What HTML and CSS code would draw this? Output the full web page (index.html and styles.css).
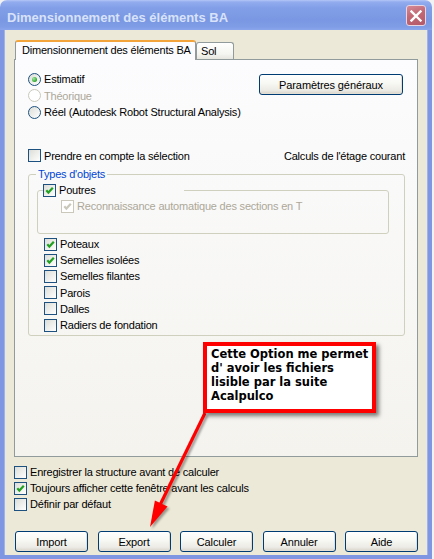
FILE: index.html
```html
<!DOCTYPE html>
<html lang="fr">
<head>
<meta charset="utf-8">
<title>Dimensionnement des éléments BA</title>
<link rel="stylesheet" href="styles.css">
</head>
<body>
<div class="window">
  <div class="titlebar">
    <span class="title">Dimensionnement des éléments BA</span>
    <span class="close"><svg width="12" height="12" viewBox="0 0 12 12"><path d="M1.5 1.5 L10.5 10.5 M10.5 1.5 L1.5 10.5" stroke="#fff" stroke-width="2.4" stroke-linecap="square"/></svg></span>
  </div>
  <div class="frame">
    <div class="tabs">
      <div class="tab active">Dimensionnement des éléments BA</div>
      <div class="tab sol">Sol</div>
    </div>
    <div class="page">
      <div class="top-row">
        <div class="radios">
          <div class="opt"><span class="rb checked"></span>Estimatif</div>
          <div class="opt disabled"><span class="rb"></span>Théorique</div>
          <div class="opt"><span class="rb"></span>Réel (Autodesk Robot Structural Analysis)</div>
        </div>
        <button class="btn wide">Paramètres généraux</button>
      </div>
      <div class="sel-row">
        <div class="opt"><span class="cb"></span>Prendre en compte la sélection</div>
        <span>Calculs de l'étage courant</span>
      </div>
      <fieldset class="group">
        <legend>Types d'objets</legend>
        <fieldset class="subgroup">
          <legend><div class="opt"><span class="cb"><svg viewBox="0 0 11 11" width="11" height="11"><path d="M2.3 5.2 L4.4 7.6 L8.8 2.8" fill="none" stroke="currentColor" stroke-width="2.2"/></svg></span>Poutres</div></legend>
          <div class="opt disabled sub"><span class="cb"><svg viewBox="0 0 11 11" width="11" height="11"><path d="M2.3 5.2 L4.4 7.6 L8.8 2.8" fill="none" stroke="currentColor" stroke-width="2.2"/></svg></span>Reconnaissance automatique des sections en T</div>
        </fieldset>
        <div class="list">
          <div class="opt"><span class="cb"><svg viewBox="0 0 11 11" width="11" height="11"><path d="M2.3 5.2 L4.4 7.6 L8.8 2.8" fill="none" stroke="currentColor" stroke-width="2.2"/></svg></span>Poteaux</div>
          <div class="opt"><span class="cb"><svg viewBox="0 0 11 11" width="11" height="11"><path d="M2.3 5.2 L4.4 7.6 L8.8 2.8" fill="none" stroke="currentColor" stroke-width="2.2"/></svg></span>Semelles isolées</div>
          <div class="opt"><span class="cb"></span>Semelles filantes</div>
          <div class="opt"><span class="cb"></span>Parois</div>
          <div class="opt"><span class="cb"></span>Dalles</div>
          <div class="opt"><span class="cb"></span>Radiers de fondation</div>
        </div>
      </fieldset>
    </div>
    <div class="options">
      <div class="opt"><span class="cb"></span>Enregistrer la structure avant de calculer</div>
      <div class="opt"><span class="cb"><svg viewBox="0 0 11 11" width="11" height="11"><path d="M2.3 5.2 L4.4 7.6 L8.8 2.8" fill="none" stroke="currentColor" stroke-width="2.2"/></svg></span>Toujours afficher cette fenêtre avant les calculs</div>
      <div class="opt"><span class="cb"></span>Définir par défaut</div>
    </div>
    <div class="buttons">
      <button class="btn">Import</button>
      <button class="btn">Export</button>
      <button class="btn">Calculer</button>
      <button class="btn">Annuler</button>
      <button class="btn">Aide</button>
    </div>
  </div>
  <svg class="arrow" width="434" height="559" viewBox="0 0 434 559">
    <line x1="205" y1="413" x2="160" y2="505" stroke="#ff0000" stroke-width="3.2"/>
    <polygon points="150,527 167.5,506.5 154.9,500.5" fill="#ff0000"/>
  </svg>
  <div class="callout">Cette Option me permet<br>d' avoir les fichiers<br>lisible par la suite<br>Acalpulco</div>
</div>
</body>
</html>
```

FILE: styles.css
```css
* { box-sizing: border-box; }
html, body { margin: 0; padding: 0; }
body {
  width: 434px;
  height: 559px;
  overflow: hidden;
  background: #f2f2f2;
  font-family: "Liberation Sans", Arial, sans-serif;
  font-size: 11px;
  letter-spacing: -0.2px;
  color: #000;
}
.window {
  position: relative;
  width: 432px;
  height: 559px;
  display: flex;
  flex-direction: column;
}
.titlebar {
  height: 30px;
  flex: none;
  display: flex;
  align-items: flex-start;
  padding-left: 7px;
  border-radius: 7px 7px 0 0;
  background: linear-gradient(180deg, #b4c6f6 0px, #93acef 2px, #819ee7 8px, #7a97e3 20px, #7f9ce6 27px, #8ba6eb 30px);
}
.title {
  margin-top: 10px;
  font-weight: bold;
  font-size: 13px;
  line-height: 15px;
  letter-spacing: 0;
  color: #d8e2f8;
  white-space: nowrap;
}
.close {
  margin-left: auto;
  margin-right: 6px;
  margin-top: 5px;
  width: 20px;
  height: 21px;
  border: 1px solid #e6d6e4;
  border-radius: 3px;
  background: linear-gradient(160deg, #d48a96, #c26875 45%, #b35868);
  display: flex;
  align-items: center;
  justify-content: center;
}
.frame {
  flex: 1;
  background: #ece9d8;
  border: 4px solid #7f96e2;
  border-top: 0;
  box-shadow: inset 1px 0 #9fb2ee, inset -1px 0 #9fb2ee;
  padding: 10px 10px 0 10px;
  display: flex;
  flex-direction: column;
}
.tabs {
  display: flex;
  align-items: flex-end;
  height: 20px;
  margin-left: 1px;
  margin-bottom: -1px;
  position: relative;
  z-index: 1;
}
.tab {
  border: 1px solid #919b9c;
  border-bottom: none;
  border-radius: 3px 3px 0 0;
  white-space: nowrap;
}
.tab.active {
  width: 181px;
  height: 20px;
  border-top: 2px solid #f3a53b;
  padding: 1px 0 0 6px;
  line-height: 14px;
  background: #fcfcfe;
}
.tab.sol {
  width: 38px;
  height: 17px;
  margin-bottom: 1px;
  padding: 1px 0 0 4px;
  line-height: 14px;
  background: linear-gradient(180deg, #ffffff, #f4f4f0 70%, #e6e5de);
}
.page {
  height: 398px;
  flex: none;
  border: 1px solid #919b9c;
  background: linear-gradient(180deg, #fcfcfe, #f4f3ee);
}
.opt {
  display: flex;
  align-items: center;
  gap: 3px;
  white-space: nowrap;
  height: 16px;
}
.opt.disabled { color: #aca899; }
.rb {
  width: 13px;
  height: 13px;
  flex: none;
  border-radius: 50%;
  border: 1px solid #1c5180;
  background: linear-gradient(135deg, #dcdcd7, #ffffff);
  display: inline-flex;
  align-items: center;
  justify-content: center;
}
.rb.checked::after {
  content: "";
  width: 5px;
  height: 5px;
  border-radius: 50%;
  background: radial-gradient(circle at 35% 35%, #a6e6a6, #21a121 75%);
}
.opt.disabled .rb { border-color: #cac8bb; background: #fff; }
.cb {
  width: 13px;
  height: 13px;
  flex: none;
  border: 1px solid #1c5180;
  background: linear-gradient(135deg, #dcdcd7, #ffffff);
  color: #21a121;
  display: inline-flex;
  align-items: center;
  justify-content: center;
}
.cb svg { display: block; }
.opt.disabled .cb { border-color: #cac8bb; background: #fff; color: #cac8bb; }
.top-row {
  display: flex;
  justify-content: space-between;
  align-items: flex-start;
  padding: 11px 14px 0 13px;
}
.radios { display: flex; flex-direction: column; }
.radios .opt { height: 16.5px; }
.btn {
  font-family: "Liberation Sans", Arial, sans-serif;
  font-size: 11px;
  letter-spacing: -0.1px;
  color: #000;
  width: 73px;
  height: 21px;
  padding: 0;
  border: 1px solid #003c74;
  border-radius: 3px;
  background: linear-gradient(180deg, #ffffff 0%, #f7f7f3 45%, #ecebe5 80%, #d8d3c9 100%);
  box-shadow: inset -1px -1px 0 #e3dfd4;
}
.btn.wide { width: 144px; margin-top: 3px; }
.sel-row {
  display: flex;
  justify-content: space-between;
  align-items: center;
  height: 16px;
  margin-top: 27px;
  padding: 0 12px 0 13px;
}
.group {
  margin: 4px 12px 0 13px;
  padding: 0 0 2px 0;
  border: 1px solid #d0d0bf;
  border-radius: 3px;
  min-inline-size: 0;
}
.group > legend {
  margin-left: 7px;
  padding: 0 2px;
  line-height: 13px;
  color: #0046d5;
}
.subgroup {
  margin: 1.5px 15px 0 8px;
  padding: 0 0 19px 0;
  border: 1px solid #d0d0bf;
  border-radius: 3px;
  min-inline-size: 0;
}
.subgroup > legend {
  margin-left: 5px;
  padding: 0;
  width: 141px;
  height: 16px;
}
.opt.sub { margin-left: 23px; }
.list {
  margin-top: 2px;
  padding-left: 15px;
}
.list .opt { height: 16.2px; }
.options {
  margin-top: 7px;
}
.buttons {
  margin-top: 19px;
  margin-left: 1px;
  width: 403px;
  display: flex;
  justify-content: space-between;
}
.arrow {
  position: absolute;
  top: 0;
  left: 0;
  pointer-events: none;
  filter: drop-shadow(2px 2px 1px rgba(0, 0, 0, 0.35));
}
.callout {
  position: absolute;
  left: 203px;
  top: 342px;
  width: 173px;
  height: 71px;
  border: 4px solid #ff0000;
  background: #fff;
  padding: 1px 0 0 4px;
  font-family: "DejaVu Sans", Verdana, sans-serif;
  font-weight: bold;
  font-size: 11.5px;
  letter-spacing: 0;
  line-height: 14px;
  white-space: nowrap;
  box-shadow: 3px 3px 4px rgba(0, 0, 0, 0.5);
}
```
